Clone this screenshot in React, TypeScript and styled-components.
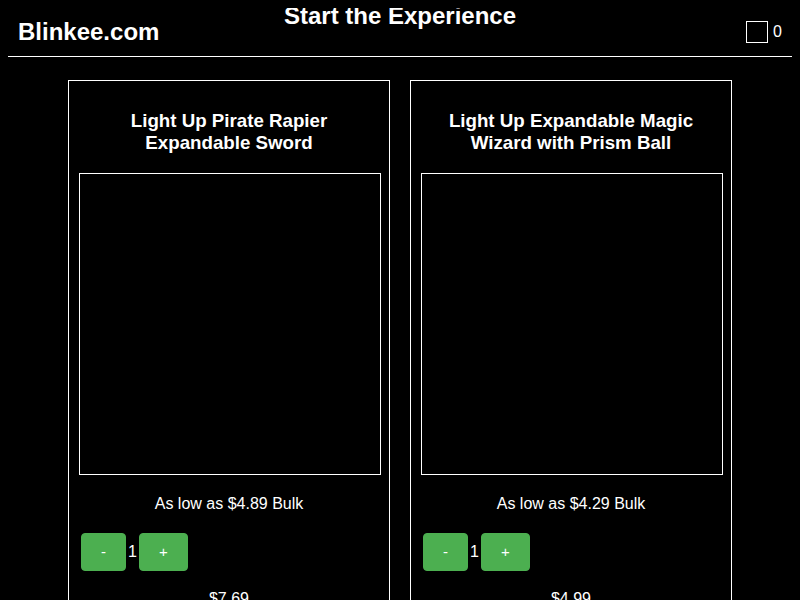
import styled, { createGlobalStyle } from 'styled-components'

const GlobalStyle = createGlobalStyle`
  body {
    margin: 8px;
    background: #000;
    color: #fff;
    font-family: 'Liberation Sans', Arial, sans-serif;
    overflow: hidden;
  }
`

const Header = styled.header`
  display: grid;
  grid-template-columns: 1fr auto 1fr;
  align-items: center;
  height: 48px;
  padding: 0 10px;
  border-bottom: 1px solid #fff;
`

const Logo = styled.div`
  font-size: 24px;
  font-weight: bold;
  justify-self: start;
`

const Title = styled.h2`
  margin: -6px 0 0;
  font-size: 24px;
  font-weight: bold;
  align-self: start;
`

const Cart = styled.div`
  justify-self: end;
  display: flex;
  align-items: center;
  gap: 5px;
  font-size: 16px;
`

const CartBox = styled.div`
  width: 20px;
  height: 20px;
  border: 1px solid #fff;
`

const Products = styled.div`
  display: flex;
  justify-content: center;
  gap: 20px;
  margin-top: 23px;
`

const Card = styled.div`
  width: 300px;
  padding: 0 10px 10px;
  border: 1px solid #fff;
  text-align: center;
`

const Name = styled.h3`
  font-size: 18.72px;
  margin: 29px 0 19px;
`

const Picture = styled.div`
  width: 300px;
  height: 300px;
  border: 1px solid #fff;
  margin: 0 0 20px;
`

const Bulk = styled.p`
  margin: 0;
  font-size: 16px;
`

const Stepper = styled.div`
  display: flex;
  align-items: center;
  margin-top: 18px;
`

const StepButton = styled.button`
  margin: 2px;
  padding: 10px 19px;
  background: #4caf50;
  color: #fff;
  border: 1px solid #4caf50;
  border-radius: 4px;
  font-family: 'Liberation Sans', Arial, sans-serif;
  font-size: 15px;
  line-height: 16px;
`

const Qty = styled.span`
  font-size: 16px;
`

const Price = styled.p`
  margin: 17px 0 0;
  font-size: 16px;
`

const products = [
  { name: 'Light Up Pirate Rapier Expandable Sword', bulk: '$4.89', price: '$7.69' },
  { name: 'Light Up Expandable Magic Wizard with Prism Ball', bulk: '$4.29', price: '$4.99' },
]

export default function App() {
  return (
    <>
      <GlobalStyle />
      <Header>
        <Logo>Blinkee.com</Logo>
        <Title>Start the Experience</Title>
        <Cart>
          <CartBox />
          <span>0</span>
        </Cart>
      </Header>
      <Products>
        {products.map((p) => (
          <Card key={p.name}>
            <Name>{p.name}</Name>
            <Picture />
            <Bulk>As low as {p.bulk} Bulk</Bulk>
            <Stepper>
              <StepButton>-</StepButton>
              <Qty>1</Qty>
              <StepButton>+</StepButton>
            </Stepper>
            <Price>{p.price}</Price>
          </Card>
        ))}
      </Products>
    </>
  )
}
